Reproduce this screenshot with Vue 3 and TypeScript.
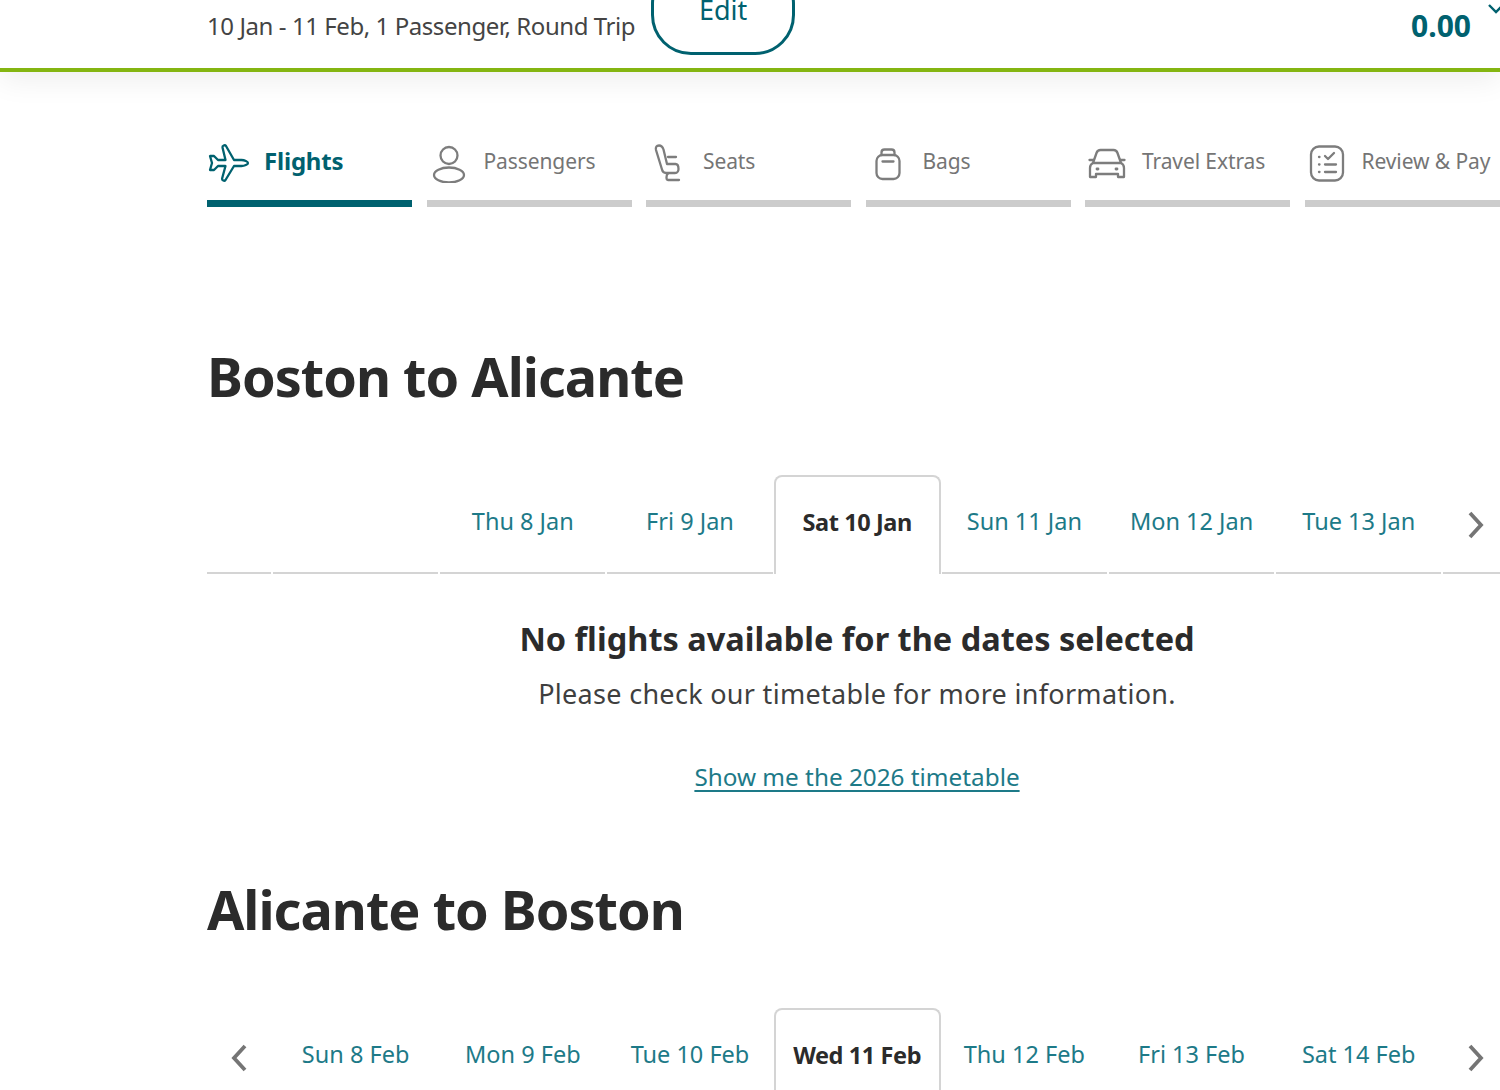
<script setup lang="ts">
interface Step { label: string; icon: string; active?: boolean }
const steps: Step[] = [
  { label: 'Flights', icon: 'plane', active: true },
  { label: 'Passengers', icon: 'person' },
  { label: 'Seats', icon: 'seat' },
  { label: 'Bags', icon: 'bag' },
  { label: 'Travel Extras', icon: 'car' },
  { label: 'Review & Pay', icon: 'list' },
]
const janDays = ['', 'Thu 8 Jan', 'Fri 9 Jan', 'Sat 10 Jan', 'Sun 11 Jan', 'Mon 12 Jan', 'Tue 13 Jan']
const febDays = ['Sun 8 Feb', 'Mon 9 Feb', 'Tue 10 Feb', 'Wed 11 Feb', 'Thu 12 Feb', 'Fri 13 Feb', 'Sat 14 Feb']
</script>

<template>
  <div class="page">
    <header class="header">
      <span class="summary">10 Jan - 11 Feb, 1 Passenger, Round Trip</span>
      <button class="edit">Edit</button>
      <span class="total">0.00</span>
      <svg class="total-chev" width="20" height="16" viewBox="0 0 20 16"><path d="M2 2l7 7 7-7" fill="none" stroke="#00616f" stroke-width="2.4" /></svg>
    </header>

    <main class="content">
      <nav class="steps">
        <div v-for="s in steps" :key="s.label" class="step" :class="{ active: s.active }">
          <div class="step-body">
            <span class="step-icon">
              <svg width="44" height="40" viewBox="0 0 44 40" fill="none" :stroke="s.active ? '#00616f' : '#7d7d7d'" stroke-width="2.3" stroke-linecap="round" stroke-linejoin="round">
                <path v-if="s.icon === 'plane'" d="M3 13h4l4 4h7.500L15.500 4.500c-.4-1.800 2.400-3 3.500-1.500l8 14h7.500c3 0 6.500 1.500 6.500 3s-3.500 3-6.500 3H27l-8.500 14c-1.100 1.500-3.800.3-3.400-1.500l3.400-12.500H11l-4 4H3l2-7z" />
                <g v-else-if="s.icon === 'person'">
                  <circle cx="22" cy="12.500" r="8.500" />
                  <ellipse cx="22" cy="32" rx="15" ry="7.500" />
                </g>
                <g v-else-if="s.icon === 'seat'">
                  <path d="M10 7c-.7-3 .6-4.500 3-4.500s3.500 1 4.500 4l3.500 14.500h8.500c2.500 0 3 3.500 3 5s-1 4-3.500 4H20c-2.500 0-3.500-1.500-4-3.500z" />
                  <path d="M22 14h8M22 30.500c-2 1.500-2 6.500 0 6.500h11" />
                </g>
                <g v-else-if="s.icon === 'bag'">
                  <rect x="10.500" y="12" width="23" height="24" rx="6" />
                  <path d="M15.500 12V9.500c0-2 1.500-3 3-3h7c1.500 0 3 1 3 3V12M16.500 18.500h11" />
                </g>
                <g v-else-if="s.icon === 'car'">
                  <path d="M8 20l3.500-10c.7-2 2-3 4-3h13c2 0 3.300 1 4 3L36 20M8 20c-2 1-3 2.500-3 5v9h6v-3h22v3h6v-9c0-2.500-1-4-3-5zM8 17H4.500M36 17h3.500" />
                  <path d="M12 26h1M31 26h1" stroke-width="2.800" />
                </g>
                <g v-else>
                  <rect x="6" y="3.500" width="32" height="34" rx="8" />
                  <path d="M20 13l3 3 6-6M20 21.500h11M20 29h11M14 14h.5M14 21.500h.5M14 29h.5" />
                </g>
              </svg>
            </span>
            <span class="step-label">{{ s.label }}</span>
          </div>
          <div class="step-bar"></div>
        </div>
      </nav>

      <section class="leg leg-first">
        <h1 class="leg-title">Boston to Alicante</h1>
        <div class="dates">
          <div class="date-arrow"></div>
          <div v-for="(d, i) in janDays" :key="'j' + i" class="date" :class="{ selected: i === 3 }">{{ d }}</div>
          <div class="date-arrow">
            <svg width="18" height="28" viewBox="0 0 18 28"><path d="M3 2l11 12L3 26" fill="none" stroke="#757575" stroke-width="3.800" /></svg>
          </div>
        </div>
        <div class="notice">
          <h2 class="notice-title">No flights available for the dates selected</h2>
          <p class="notice-text">Please check our timetable for more information.</p>
          <a class="notice-link" href="#">Show me the 2026 timetable</a>
        </div>
      </section>

      <section class="leg leg-second">
        <h1 class="leg-title">Alicante to Boston</h1>
        <div class="dates">
          <div class="date-arrow">
            <svg width="18" height="28" viewBox="0 0 18 28"><path d="M15 2L4 14l11 12" fill="none" stroke="#757575" stroke-width="3.800" /></svg>
          </div>
          <div v-for="(d, i) in febDays" :key="'f' + i" class="date" :class="{ selected: i === 3 }">{{ d }}</div>
          <div class="date-arrow">
            <svg width="18" height="28" viewBox="0 0 18 28"><path d="M3 2l11 12L3 26" fill="none" stroke="#757575" stroke-width="3.800" /></svg>
          </div>
        </div>
      </section>
    </main>
  </div>
</template>

<style>
html, body { margin: 0; overflow: hidden; background: #fff; }
</style>

<style scoped>
.page {
  width: 1500px;
  height: 1090px;
  overflow: hidden;
  background: #fff;
  font-family: "Noto Sans", "Open Sans", sans-serif;
  color: #2b2b2b;
}
.header {
  height: 68px;
  box-sizing: content-box;
  display: flex;
  align-items: flex-start;
  padding-left: 207px;
  border-bottom: 4px solid #84b511;
  box-shadow: 0 8px 30px rgba(0, 0, 0, 0.07);
  overflow: hidden;
  position: relative;
}
.summary {
  font-size: 24px;
  line-height: 52px;
  letter-spacing: -0.43px;
  color: #444;
  white-space: nowrap;
}
.edit {
  box-sizing: border-box;
  width: 144px;
  height: 91px;
  margin: -36px 0 0 16px;
  padding: 0;
  border: 3px solid #00616f;
  border-radius: 40px;
  background: #fff;
  color: #00616f;
  font: 400 27px "Noto Sans", sans-serif;
}
.total {
  margin-left: auto;
  margin-right: 16px;
  font-size: 30px;
  font-weight: 700;
  line-height: 52px;
  color: #00616f;
}
.total-chev { flex: none; margin: 3px -7px 0 0; }
.content { padding-left: 207px; width: 1310px; }
.steps {
  display: grid;
  grid-template-columns: repeat(6, 205px);
  column-gap: 14.500px;
  padding-top: 68px;
}
.step-body {
  height: 60px;
  display: flex;
  align-items: flex-start;
}
.step-icon { width: 44px; height: 40px; margin: 3px 13px 0 0; flex: none; }
.step-label {
  font-size: 21px;
  line-height: 42px;
  letter-spacing: -0.1px;
  color: #757575;
  white-space: nowrap;
}
.active .step-label { color: #00616f; font-weight: 700; font-size: 24px; letter-spacing: -0.2px; }
.step-bar { height: 7px; background: #cccccc; }
.active .step-bar { background: #00616f; }
.leg-first { padding-top: 131px; }
.leg-second { padding-top: 75px; }
.leg-title {
  margin: 0;
  font-size: 54px;
  line-height: 76px;
  font-weight: 700;
  letter-spacing: -1px;
  color: #2b2b2b;
}
.dates {
  margin-top: 61px;
  display: grid;
  grid-template-columns: 64px repeat(7, 165.200px) 66px;
  column-gap: 2px;
  height: 99px;
}
.date {
  display: flex;
  align-items: center;
  justify-content: center;
  padding-bottom: 6px;
  font-size: 23.500px;
  color: #1d7a88;
  white-space: nowrap;
  box-sizing: border-box;
  height: 99px;
  border-bottom: 2px solid #d4d4d4;
}
.date.selected {
  margin: 0 -1px;
  padding-bottom: 8px;
  color: #2b2b2b;
  font-weight: 700;
  letter-spacing: -0.4px;
  background: #fff;
  border: 2px solid #d4d4d4;
  border-bottom: 0;
  border-radius: 8px 8px 0 0;
}
.date-arrow {
  display: flex;
  align-items: center;
  justify-content: center;
  box-sizing: border-box;
  height: 99px;
  padding-top: 2px;
  border-bottom: 2px solid #d4d4d4;
}
.notice {
  text-align: center;
  width: 1300px;
  padding-top: 42px;
}
.notice-title {
  margin: 0;
  font-size: 32.500px;
  line-height: 46px;
  font-weight: 700;
}
.notice-text {
  margin: 12px 0 0;
  font-size: 27px;
  line-height: 40px;
  color: #3f3f3f;
  letter-spacing: 0.3px;
}
.notice-link {
  display: block;
  margin-top: 44px;
  font-size: 24.300px;
  line-height: 38px;
  color: #1d7a88;
  text-decoration: underline;
  text-underline-offset: 4px;
  text-decoration-thickness: 1.500px;
}
</style>
